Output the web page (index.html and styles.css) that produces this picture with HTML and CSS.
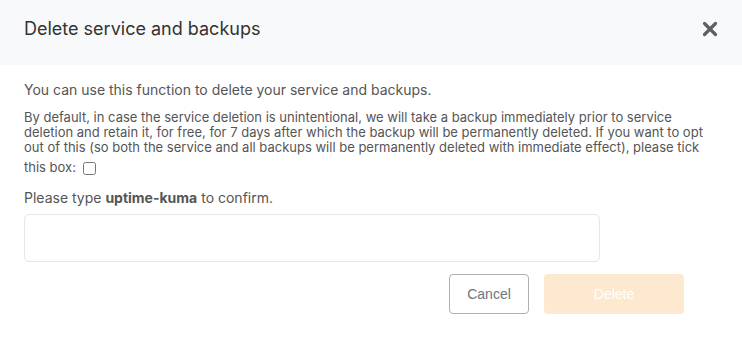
FILE: index.html
```html
<!DOCTYPE html>
<html lang="en">
<head>
    <meta charset="UTF-8">
    <meta name="viewport" content="width=device-width, initial-scale=1.0">
    <title>Delete service and backups</title>
    <link rel="stylesheet" href="styles.css">
</head>
<body>
    <div class="modal">
        <div class="modal-header">
            <h2 class="modal-title">Delete service and backups</h2>
            <button class="close" aria-label="Close">
                <svg width="16" height="16" viewBox="0 0 16 16">
                    <path d="M2.5 2.5 L13.5 13.5 M13.5 2.5 L2.5 13.5" stroke="#5f5f5f" stroke-width="3.2" stroke-linecap="round"/>
                </svg>
            </button>
        </div>
        <div class="modal-body">
            <p class="lead">You can use this function to delete your service and backups.</p>
            <p class="info">By default, in case the service deletion is unintentional, we will take a backup immediately prior to service deletion and retain it, for free, for 7 days after which the backup will be permanently deleted. If you want to opt out of this (so both the service and all backups will be permanently deleted with immediate effect), please tick this box: <input type="checkbox" class="tick"></p>
            <p class="lead confirm">Please type <b>uptime-kuma</b> to confirm.</p>
            <input type="text" class="confirm-input">
            <div class="actions">
                <button class="button cancel">Cancel</button>
                <button class="button delete" disabled>Delete</button>
            </div>
        </div>
    </div>
</body>
</html>
```

FILE: styles.css
```css
body {
    font-family: Inter, "Noto Sans", sans-serif;
    background-color: white;
    margin: 0;
    color: #555;
}
.modal {
    width: 742px;
}
.modal-header {
    display: flex;
    align-items: center;
    justify-content: space-between;
    height: 65px;
    padding: 0 24px 8px 24px;
    box-sizing: border-box;
    background: #f8f9fa;
}
.modal-title {
    margin: 0;
    font-size: 18px;
    font-weight: 400;
    color: #333;
}
.close {
    background: none;
    border: none;
    padding: 0;
    display: flex;
    cursor: pointer;
}
.modal-body {
    padding: 15px 24px 0 24px;
}
.lead {
    margin: 0 0 10px 0;
    font-size: 14px;
    line-height: 20px;
}
.info {
    margin: 0 0 13px 0;
    font-size: 13px;
    line-height: 15px;
}
.tick {
    width: 13px;
    height: 13px;
    margin: 7px 0 0 3px;
    vertical-align: -3px;
}
.confirm {
    margin-bottom: 6px;
}
.confirm-input {
    display: block;
    width: 576px;
    height: 48px;
    box-sizing: border-box;
    border: 1px solid #e6e6e6;
    border-radius: 5px;
    margin: 0;
}
.actions {
    display: flex;
    justify-content: flex-end;
    gap: 15px;
    margin: 12px 34px 0 0;
}
.button {
    height: 40px;
    font-family: "Liberation Sans", Arial, sans-serif;
    font-size: 14px;
    border-radius: 4px;
    cursor: pointer;
}
.cancel {
    width: 80px;
    background: white;
    border: 1px solid #b0b0b0;
    color: #6c757d;
}
.delete {
    width: 140px;
    background: #fde9cf;
    border: none;
    color: white;
}
```
